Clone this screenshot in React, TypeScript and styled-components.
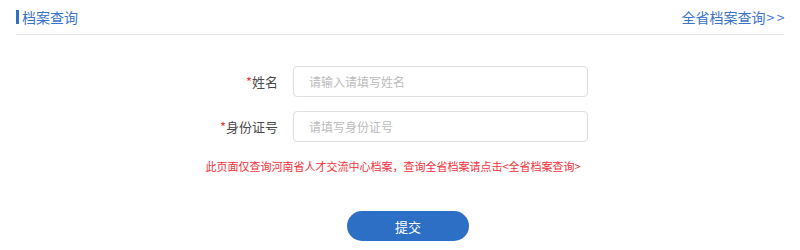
import React from "react";
import styled, { createGlobalStyle } from "styled-components";

const Global = createGlobalStyle`
  html, body { margin: 0; padding: 0; background: #fff; }
  body { font-family: "Microsoft YaHei", "Noto Sans CJK SC", sans-serif; }
  * { box-sizing: border-box; }
`;

const Page = styled.div`
  width: 800px;
  height: 250px;
  padding: 0 16px;
`;

const Header = styled.div`
  height: 35px;
  display: flex;
  align-items: center;
  justify-content: space-between;
  border-bottom: 1px solid #e6e6e6;
  padding-bottom: 1px;
`;

const Title = styled.div`
  display: flex;
  align-items: center;
  gap: 3px;
  font-size: 14px;
  color: #3a72c8;
  &::before {
    content: "";
    width: 3px;
    height: 14px;
    background: #2f6fc6;
  }
`;

const MoreLink = styled.a`
  font-size: 14px;
  color: #3a72c8;
  text-decoration: none;
  margin-right: -3px;
`;

const Arrows = styled.span`
  letter-spacing: 2.5px;
  margin-left: 1px;
`;

const Form = styled.div`
  display: grid;
  grid-template-columns: 262px 295px;
  column-gap: 15px;
  row-gap: 14px;
  align-items: center;
  margin-top: 31px;
`;

const Label = styled.label`
  text-align: right;
  font-size: 13px;
  color: #4a4a4a;
  &::before {
    content: "*";
    color: #e4393c;
  }
`;

const Input = styled.input`
  height: 31px;
  width: 295px;
  border: 1px solid #dedede;
  border-radius: 4px;
  padding: 0 15px;
  font-size: 12px;
  font-family: inherit;
  outline: none;
  &::placeholder { color: #bbbbbb; }
`;

const Notice = styled.p`
  margin: 16px 0 0;
  text-align: center;
  font-size: 11px;
  color: #f0303a;
  transform: translateX(-7px);
`;

const ButtonRow = styled.div`
  display: flex;
  justify-content: center;
  margin-top: 37px;
`;

const Submit = styled.button`
  width: 122px;
  height: 30px;
  border: none;
  border-radius: 15px;
  background: #2e6fc6;
  color: #fff;
  font-size: 13px;
  font-family: inherit;
  margin-left: 16px;
`;

export default function App() {
  return (
    <>
      <Global />
      <Page>
        <Header>
          <Title>档案查询</Title>
          <MoreLink href="#">
            全省档案查询<Arrows>&gt;&gt;</Arrows>
          </MoreLink>
        </Header>
        <Form>
          <Label>姓名</Label>
          <Input placeholder="请输入请填写姓名" />
          <Label>身份证号</Label>
          <Input placeholder="请填写身份证号" />
        </Form>
        <Notice>此页面仅查询河南省人才交流中心档案，查询全省档案请点击&lt;全省档案查询&gt;</Notice>
        <ButtonRow>
          <Submit>提交</Submit>
        </ButtonRow>
      </Page>
    </>
  );
}
